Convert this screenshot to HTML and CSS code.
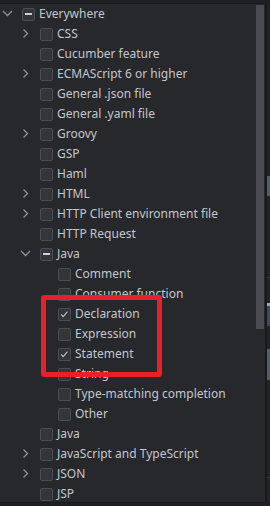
FILE: index.html
```html
<!DOCTYPE html>
<html lang="en">
<head>
  <meta charset="UTF-8">
  <meta name="viewport" content="width=device-width, initial-scale=1.0">
  <title>Postfix Completion</title>
  <link rel="stylesheet" href="styles.css">
</head>
<body>
  <div class="topStrip"></div>
  <div class="frame">
    <div class="panel">
      <div class="tree">
        <div class="row lvl0"><span class="arrow"><svg viewBox="0 0 16 16"><path d="M3 5 L7.5 9.5 L12 5"/></svg></span><span class="box mixed"></span><span class="label">Everywhere</span></div>
        <div class="row lvl1"><span class="arrow"><svg viewBox="0 0 16 16"><path d="M5.5 3.5 L9.5 7.5 L5.5 11.5"/></svg></span><span class="box"></span><span class="label">CSS</span></div>
        <div class="row lvl1"><span class="arrow"></span><span class="box"></span><span class="label">Cucumber feature</span></div>
        <div class="row lvl1"><span class="arrow"><svg viewBox="0 0 16 16"><path d="M5.5 3.5 L9.5 7.5 L5.5 11.5"/></svg></span><span class="box"></span><span class="label">ECMAScript 6 or higher</span></div>
        <div class="row lvl1"><span class="arrow"></span><span class="box"></span><span class="label">General .json file</span></div>
        <div class="row lvl1"><span class="arrow"></span><span class="box"></span><span class="label">General .yaml file</span></div>
        <div class="row lvl1"><span class="arrow"><svg viewBox="0 0 16 16"><path d="M5.5 3.5 L9.5 7.5 L5.5 11.5"/></svg></span><span class="box"></span><span class="label">Groovy</span></div>
        <div class="row lvl1"><span class="arrow"></span><span class="box"></span><span class="label">GSP</span></div>
        <div class="row lvl1"><span class="arrow"></span><span class="box"></span><span class="label">Haml</span></div>
        <div class="row lvl1"><span class="arrow"><svg viewBox="0 0 16 16"><path d="M5.5 3.5 L9.5 7.5 L5.5 11.5"/></svg></span><span class="box"></span><span class="label">HTML</span></div>
        <div class="row lvl1"><span class="arrow"><svg viewBox="0 0 16 16"><path d="M5.5 3.5 L9.5 7.5 L5.5 11.5"/></svg></span><span class="box"></span><span class="label">HTTP Client environment file</span></div>
        <div class="row lvl1"><span class="arrow"></span><span class="box"></span><span class="label">HTTP Request</span></div>
        <div class="row lvl1"><span class="arrow"><svg viewBox="0 0 16 16"><path d="M3 5 L7.5 9.5 L12 5"/></svg></span><span class="box mixed"></span><span class="label">Java</span></div>
        <div class="row lvl2"><span class="arrow"></span><span class="box"></span><span class="label">Comment</span></div>
        <div class="row lvl2"><span class="arrow"></span><span class="box"></span><span class="label">Consumer function</span></div>
        <div class="row lvl2"><span class="arrow"></span><span class="box"><svg viewBox="0 0 13 13"><path d="M2.5 6.5 L5 9 L10 3"/></svg></span><span class="label">Declaration</span></div>
        <div class="row lvl2"><span class="arrow"></span><span class="box"></span><span class="label">Expression</span></div>
        <div class="row lvl2"><span class="arrow"></span><span class="box"><svg viewBox="0 0 13 13"><path d="M2.5 6.5 L5 9 L10 3"/></svg></span><span class="label">Statement</span></div>
        <div class="row lvl2"><span class="arrow"></span><span class="box"></span><span class="label">String</span></div>
        <div class="row lvl2"><span class="arrow"></span><span class="box"></span><span class="label">Type-matching completion</span></div>
        <div class="row lvl2"><span class="arrow"></span><span class="box"></span><span class="label">Other</span></div>
        <div class="row lvl1"><span class="arrow"></span><span class="box"></span><span class="label">Java</span></div>
        <div class="row lvl1"><span class="arrow"><svg viewBox="0 0 16 16"><path d="M5.5 3.5 L9.5 7.5 L5.5 11.5"/></svg></span><span class="box"></span><span class="label">JavaScript and TypeScript</span></div>
        <div class="row lvl1"><span class="arrow"><svg viewBox="0 0 16 16"><path d="M5.5 3.5 L9.5 7.5 L5.5 11.5"/></svg></span><span class="box"></span><span class="label">JSON</span></div>
        <div class="row lvl1"><span class="arrow"></span><span class="box"></span><span class="label">JSP</span></div>
        <div class="highlight"></div>
      </div>
      <div class="scroll"><div class="thumb"></div></div>
    </div>
    <div class="side">
      <div class="sideBlock b1"></div>
      <div class="sideLine l1"></div>
      <div class="sideBlock b2"></div>
      <div class="sideBlock b3"></div>
      <div class="sideLine l2"></div>
    </div>
  </div>
</body>
</html>
```

FILE: styles.css
```css
body {
  margin: 0;
  background: #1f2023;
  font-family: "Noto Sans", "Open Sans", sans-serif;
  font-size: 12px;
  color: #c3c6cc;
  overflow: hidden;
}

.topStrip { height: 3px; }

.frame { display: flex; height: 500px; }

.panel {
  display: flex;
  width: 265px;
  height: 498px;
  background: #27282c;
  border-top: 1px solid #1a1b1e;
  border-right: 2px solid #18191b;
  border-bottom: 1px solid #18191b;
  overflow: hidden;
}

.tree { position: relative; width: 256px; }

.row {
  display: flex;
  align-items: center;
  height: 20px;
  white-space: nowrap;
}
.lvl1 { padding-left: 18px; }
.lvl2 { padding-left: 36px; }

.arrow {
  width: 16px;
  height: 16px;
  margin-right: 6px;
  flex: none;
}
.arrow svg { width: 16px; height: 16px; display: block; }
.arrow path { fill: none; stroke: #8e9197; stroke-width: 1.3; }

.box {
  display: flex;
  align-items: center;
  justify-content: center;
  width: 11px;
  height: 11px;
  margin-right: 4px;
  flex: none;
  background: #343539;
  border: 1px solid #4b4d52;
  border-radius: 2px;
}
.box svg { width: 11px; height: 11px; display: block; }
.box path { fill: none; stroke: #b9bbc0; stroke-width: 1.4; }
.box.mixed::after {
  content: '';
  width: 7px;
  height: 2px;
  background: #ced0d5;
}

.label { line-height: 20px; }

.highlight {
  position: absolute;
  left: 41px;
  top: 291px;
  width: 111px;
  height: 72px;
  border: 5px solid #e8202a;
  border-radius: 3px;
}

.scroll { width: 9px; padding-top: 1px; }
.thumb { width: 8px; height: 324px; background: #4b4c51; }

.side {
  position: relative;
  width: 3px;
  height: 500px;
  background: #222326;
}
.sideBlock { position: absolute; left: 0; width: 3px; background: #4d5d7c; }
.b1 { top: 173px; height: 20px; }
.b2 { top: 300px; height: 20px; background: #3c4a63; border-top: 3px solid #9aa6bd; }
.b3 { top: 346px; height: 31px; }
.sideLine { position: absolute; left: 0; width: 3px; height: 1px; background: #3a3b3f; }
.l1 { top: 274px; }
.l2 { top: 474px; }
```
